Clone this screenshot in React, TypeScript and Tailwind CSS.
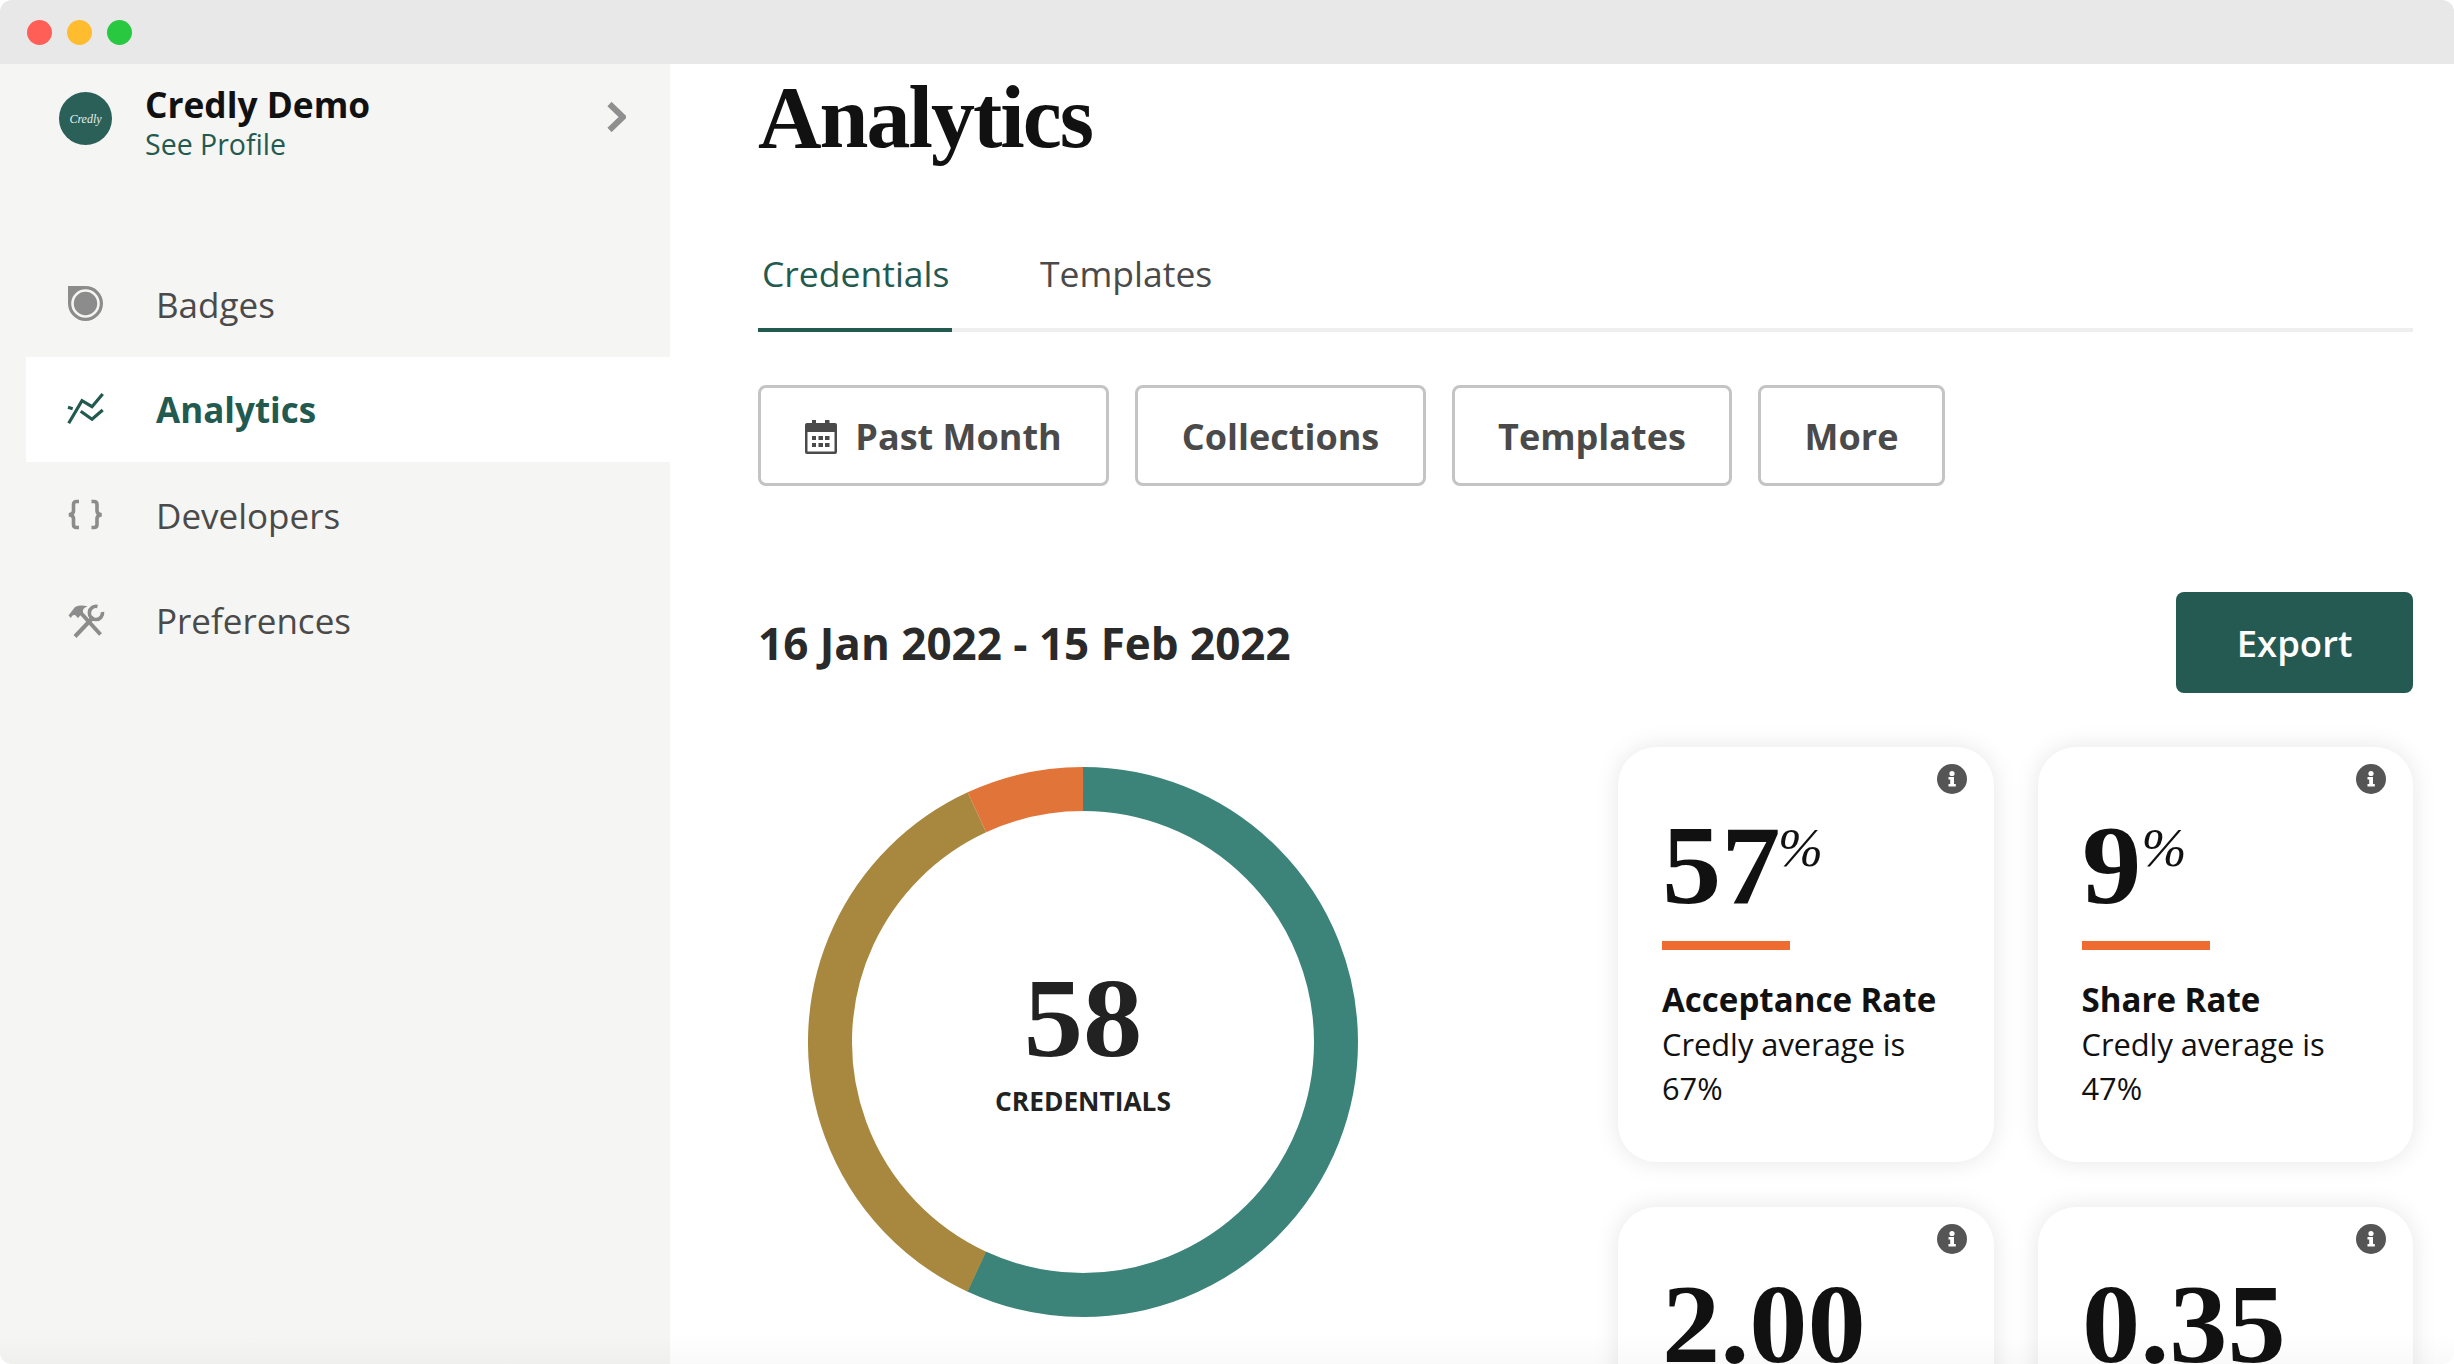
import React from "react";

const BadgeIcon = () => (
  <svg width="50" height="50" viewBox="0 0 50 50">
    <path d="M8 7H25.5A17.5 17.5 0 1 1 8 24.5Z" fill="#8c8c8c" />
    <circle cx="25.5" cy="24.5" r="13" fill="none" stroke="#f5f5f3" strokeWidth="2.6" />
  </svg>
);

const AnalyticsIcon = () => (
  <svg width="50" height="50" viewBox="0 0 50 50" fill="none" stroke="#235a50" strokeWidth="3.2">
    <path d="M8.7 39.3L22 16.7L32 22.7L42.7 10" />
    <path d="M20.7 27.3L32 35.3L42.7 26" />
    <path d="M8 23.3L12.7 24.7" />
  </svg>
);

const BracesIcon = () => (
  <svg width="50" height="50" viewBox="0 0 50 50" fill="none" stroke="#8c8c8c" strokeWidth="3.6">
    <path d="M19 11.5H16.5Q13.5 11.5 13.5 14.5V21Q13.5 24 9 24.7Q13.5 25.4 13.5 28.5V34.5Q13.5 37.5 16.5 37.5H19" />
    <path d="M31.5 11.5H34Q37 11.5 37 14.5V21Q37 24 41.5 24.7Q37 25.4 37 28.5V34.5Q37 37.5 34 37.5H31.5" />
  </svg>
);

const ToolsIcon = () => (
  <svg width="50" height="50" viewBox="0 0 50 50" fill="none" stroke="#8c8c8c">
    <path d="M20 16L40.5 38.5" strokeWidth="4" />
    <path d="M15 40.5L33.5 21" strokeWidth="4" />
    <path d="M8.5 19.5L15 11Q21 8.5 27.5 10.5Q22 12 23 16.5L18 22L15 19Q12 18.5 11 22Z" fill="#8c8c8c" stroke="none" />
    <path d="M37.5 10.5A6.6 6.6 0 1 0 42.5 16" strokeWidth="3.6" />
  </svg>
);

const CalendarIcon = () => (
  <svg width="32" height="34" viewBox="0 0 32 34" fill="#4a4a4a">
    <rect x="7" y="0" width="4" height="6" />
    <rect x="20" y="0" width="4.5" height="6" />
    <path d="M2 3H30A2 2 0 0 1 32 5V32A2 2 0 0 1 30 34H2A2 2 0 0 1 0 32V5A2 2 0 0 1 2 3ZM2.500 12V31.500H29.500V12Z" fillRule="evenodd" />
    <rect x="7" y="16" width="4" height="4" />
    <rect x="13.500" y="16" width="4.500" height="4" />
    <rect x="20" y="16" width="4.500" height="4" />
    <rect x="7" y="23" width="4" height="4" />
    <rect x="13.500" y="23" width="4.500" height="4" />
    <rect x="20" y="23" width="4.500" height="4" />
  </svg>
);

const InfoIcon = () => (
  <svg width="30" height="30" viewBox="0 0 30 30" className="absolute top-[17px] right-[27px]">
    <circle cx="15" cy="15" r="15" fill="#555555" />
    <circle cx="15" cy="9.500" r="2.600" fill="#ffffff" />
    <path d="M11.500 13H17V20H18.800V22.500H11.500V20H13.200V15.500H11.500Z" fill="#ffffff" />
  </svg>
);

const navItems = [
  { label: "Badges", icon: <BadgeIcon />, active: false },
  { label: "Analytics", icon: <AnalyticsIcon />, active: true },
  { label: "Developers", icon: <BracesIcon />, active: false },
  { label: "Preferences", icon: <ToolsIcon />, active: false },
];

const filters = [
  { label: "Past Month", width: "w-[351px]", icon: <CalendarIcon /> },
  { label: "Collections", width: "w-[291px]" },
  { label: "Templates", width: "w-[280px]" },
  { label: "More", width: "w-[187px]" },
];

const rates = [
  { value: "57", title: "Acceptance Rate", average: "67%" },
  { value: "9", title: "Share Rate", average: "47%" },
];

const Sidebar = () => (
  <aside className="w-[670px] shrink-0 bg-[#f5f5f3] pl-[26px]">
    <div className="flex h-[222px] items-start">
      <div className="ml-[33px] mt-[28px] flex h-[53px] w-[53px] items-center justify-center rounded-full bg-[#2a6058]">
        <span className="font-['Liberation_Serif'] text-[12px] italic text-[#e6efec]">Credly</span>
      </div>
      <div className="ml-[33px] mt-[17px] w-[462px]">
        <div className="text-[35.3px] leading-[46px] font-bold text-[#111111]">Credly Demo</div>
        <div className="text-[28.5px] leading-[34px] text-[#235a50]">See Profile</div>
      </div>
      <svg width="19" height="30" viewBox="0 0 19 30" fill="none" stroke="#8f8f8f" strokeWidth="6" className="mt-[38px]">
        <path d="M2.500 2L16 15L2.500 28" />
      </svg>
    </div>
    <nav className="-mt-[35px] flex flex-col">
      {navItems.map((item) => (
        <div
          key={item.label}
          className={`flex h-[105.6px] items-center pl-[34px] ${item.active ? "bg-white" : ""}`}
        >
          {item.icon}
          <span
            className={`ml-[46px] pt-[2px] text-[35px] ${
              item.active ? "font-bold text-[#235a50]" : "text-[#4a4a4a]"
            }`}
          >
            {item.label}
          </span>
        </div>
      ))}
    </nav>
  </aside>
);

const Donut = () => (
  <div className="relative mt-[74px] ml-[50px] h-[550px] w-[550px]">
    <svg width="550" height="550" viewBox="0 0 550 550" fill="none" strokeWidth="44">
      <circle cx="275" cy="275" r="253" stroke="#3c847a" strokeDasharray="904.4 1589.6" transform="rotate(-90 275 275)" />
      <circle cx="275" cy="275" r="253" stroke="#a8883e" strokeDasharray="575.6 1589.6" transform="rotate(114.8 275 275)" />
      <circle cx="275" cy="275" r="253" stroke="#e17539" strokeDasharray="109.6 1589.6" transform="rotate(245.2 275 275)" />
    </svg>
    <div className="absolute inset-x-0 top-[195px] flex flex-col items-center text-[#222222]">
      <div className="scale-x-[1.06] font-['Liberation_Serif'] text-[112px] leading-none font-bold">58</div>
      <div className="mt-[10px] text-[26.3px] leading-[34px] font-bold">CREDENTIALS</div>
    </div>
  </div>
);

const RateCard = ({ value, title, average }: { value: string; title: string; average: string }) => (
  <div className="relative h-[415px] rounded-[38px] bg-white px-[44px] pt-[62px] shadow-[0_0_24px_rgba(0,0,0,0.10)]">
    <InfoIcon />
    <div className="flex items-start font-['Liberation_Serif'] text-[#111111]">
      <span className="origin-left scale-x-[1.06] text-[112px] leading-none font-bold">{value}</span>
      <span className="mt-[12px] ml-[4px] text-[54px] leading-none italic">%</span>
    </div>
    <div className="mt-[20px] h-[9px] w-[128px] bg-[#ee6c2f]" />
    <div className="mt-[28px] text-[33.1px] leading-[44px] font-bold text-[#111111]">{title}</div>
    <div className="text-[30.8px] leading-[44px] text-[#111111]">
      Credly average is
      <br />
      {average}
    </div>
  </div>
);

const ScoreCard = ({ value }: { value: string }) => (
  <div className="relative h-[415px] rounded-[38px] bg-white px-[44px] pt-[61px] shadow-[0_0_24px_rgba(0,0,0,0.10)]">
    <InfoIcon />
    <div className="origin-left scale-x-[1.04] font-['Liberation_Serif'] text-[112px] leading-none font-bold text-[#111111]">{value}</div>
  </div>
);

export default function App() {
  return (
    <div className="relative flex h-[1364px] w-[2454px] flex-col overflow-hidden rounded-[12px] bg-white font-['Open_Sans',sans-serif]">
      <header className="flex h-[64px] shrink-0 items-center gap-[15px] bg-[#e8e8e8] pl-[27px]">
        <span className="h-[25px] w-[25px] rounded-full bg-[#ff5f57]" />
        <span className="h-[25px] w-[25px] rounded-full bg-[#febc2e]" />
        <span className="h-[25px] w-[25px] rounded-full bg-[#28c840]" />
      </header>
      <div className="flex min-h-0 flex-1">
        <Sidebar />
        <main className="flex-1 pr-[41px] pl-[88px]">
          <h1 className="mt-[10px] font-['Liberation_Serif'] text-[88px] leading-none font-bold tracking-[-2px] text-[#111111]">
            Analytics
          </h1>
          <div className="mt-[87px] flex border-b-4 border-[#eeeeee] text-[35.5px] leading-[48px]">
            <div className="-mb-1 w-[194px] border-b-4 border-[#235a50] pb-[31px] pl-[4px] text-[#235a50]">Credentials</div>
            <div className="ml-[88px] text-[#4a4a4a]">Templates</div>
          </div>
          <div className="mt-[53px] flex gap-[26px]">
            {filters.map((f) => (
              <button
                key={f.label}
                className={`flex h-[101px] items-center justify-center gap-[18px] rounded-[8px] border-[3px] border-[#c4c4c4] pt-[2px] text-[36px] font-bold text-[#4a4a4a] ${f.width}`}
              >
                {f.icon}
                {f.label}
              </button>
            ))}
          </div>
          <div className="mt-[106px] flex h-[101px] items-center justify-between">
            <h2 className="text-[44px] font-bold text-[#2a2a2a]">16 Jan 2022 - 15 Feb 2022</h2>
            <button className="h-[101px] w-[237px] rounded-[8px] bg-[#255a52] pt-[2px] text-[36.5px] font-semibold text-white">
              Export
            </button>
          </div>
          <div className="flex justify-between">
            <Donut />
            <div className="mt-[54px] grid w-[795px] grid-cols-2 gap-x-[44px] gap-y-[45px]">
              {rates.map((r) => (
                <RateCard key={r.title} {...r} />
              ))}
              <ScoreCard value="2.00" />
              <ScoreCard value="0.35" />
            </div>
          </div>
        </main>
      </div>
      <div className="pointer-events-none absolute inset-x-0 bottom-0 h-[30px] bg-gradient-to-b from-transparent to-[#00000006]" />
    </div>
  );
}
